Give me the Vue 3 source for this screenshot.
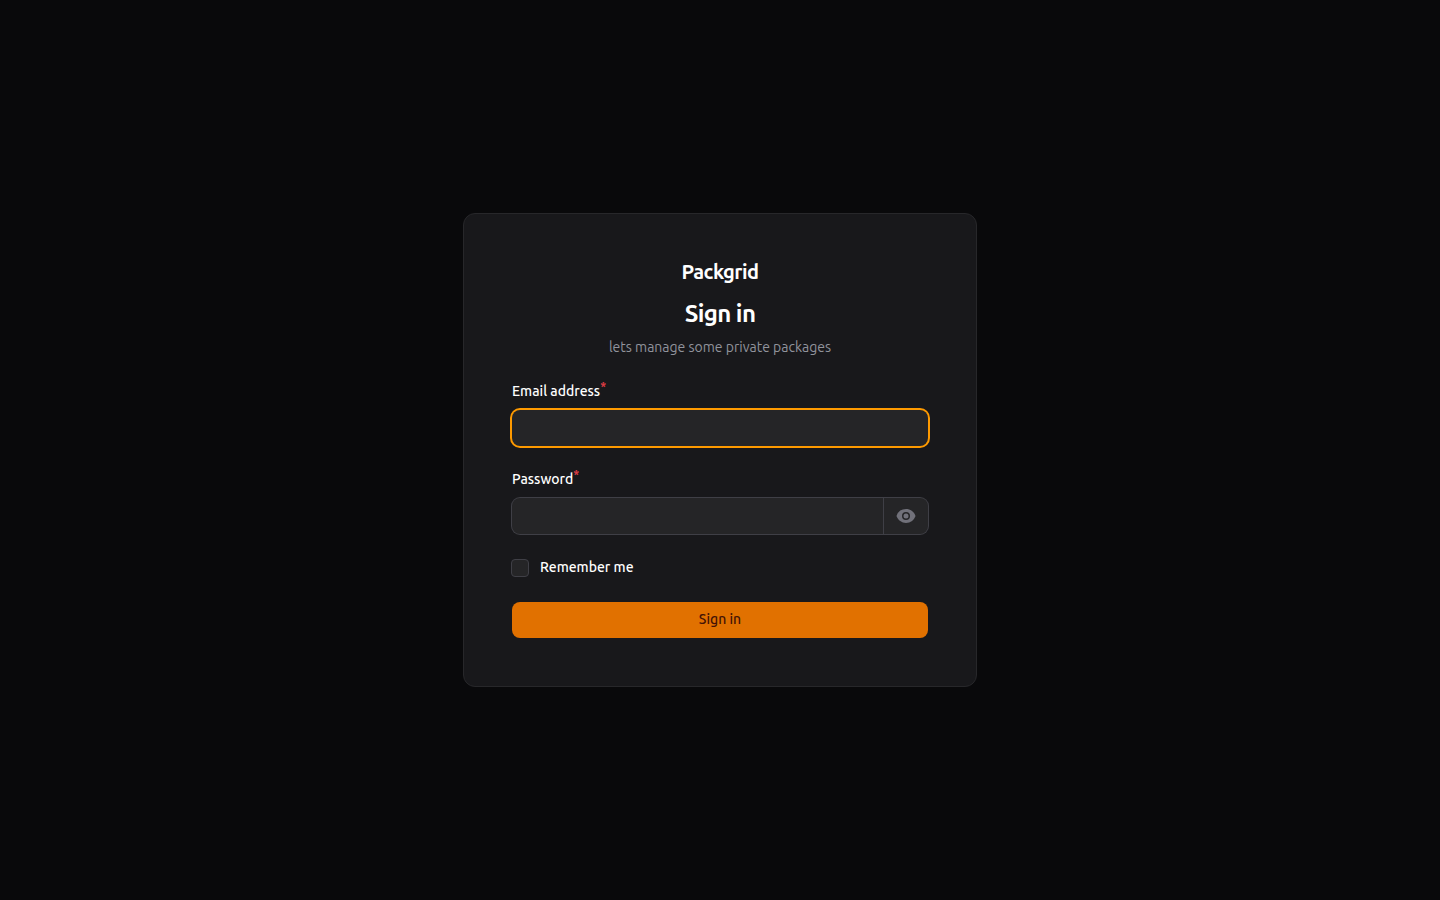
<template>
  <div class="page">
    <main class="card">
      <div class="brand">Packgrid</div>
      <h1 class="title">Sign in</h1>
      <p class="sub">lets manage some private packages</p>
      <form class="form" @submit.prevent>
        <div class="field">
          <label class="label" for="email">Email address<sup class="req">*</sup></label>
          <div class="box focused">
            <input id="email" class="input" type="email" />
          </div>
        </div>
        <div class="field">
          <label class="label" for="password">Password<sup class="req">*</sup></label>
          <div class="box">
            <input id="password" class="input" type="password" />
            <button class="eye" type="button" aria-label="Show password">
              <svg viewBox="0 0 20 20" fill="currentColor" width="20" height="20">
                <path d="M10 12.5a2.5 2.5 0 1 0 0-5 2.5 2.5 0 0 0 0 5Z" />
                <path fill-rule="evenodd" clip-rule="evenodd" d="M.664 10.59a1.651 1.651 0 0 1 0-1.186A10.004 10.004 0 0 1 10 3c4.257 0 7.893 2.66 9.336 6.41.147.381.146.804 0 1.186A10.004 10.004 0 0 1 10 17c-4.257 0-7.893-2.66-9.336-6.41ZM14 10a4 4 0 1 1-8 0 4 4 0 0 1 8 0Z" />
              </svg>
            </button>
          </div>
        </div>
        <label class="remember">
          <span class="check"></span>
          <span>Remember me</span>
        </label>
        <button class="submit" type="submit">Sign in</button>
      </form>
    </main>
  </div>
</template>

<script setup>
</script>

<style>
body {
  background: #09090b;
}
</style>

<style scoped>
.page {
  min-height: 900px;
  display: flex;
  align-items: center;
  justify-content: center;
  background: #09090b;
  font-family: "Ubuntu", "Noto Sans", sans-serif;
}

.card {
  width: 514px;
  box-sizing: border-box;
  padding: 48px;
  background: #18181b;
  border: 1px solid #27272a;
  border-radius: 12px;
  text-align: center;
}

.brand {
  font-size: 20px;
  line-height: 20px;
  font-weight: 700;
  letter-spacing: -0.025em;
  color: #fff;
}

.title {
  margin: 16px 0 0;
  font-size: 24px;
  line-height: 32px;
  font-weight: 700;
  letter-spacing: -0.025em;
  color: #fff;
}

.sub {
  margin: 7px 0 0;
  font-size: 14px;
  line-height: 20px;
  color: #91939c;
}

.form {
  margin-top: 25px;
  display: flex;
  flex-direction: column;
  gap: 24px;
  text-align: left;
}

.field {
  display: flex;
  flex-direction: column;
  gap: 8px;
}

.label {
  height: 18px;
  padding-bottom: 2px;
  font-size: 14px;
  line-height: 18px;
  font-weight: 500;
  color: #fff;
}

.req {
  position: relative;
  top: 1px;
  color: #dc3c44;
  font-size: 12px;
  font-weight: 700;
  line-height: 0;
}

.box {
  display: flex;
  height: 36px;
  background: #252527;
  border-radius: 8px;
  box-shadow: 0 0 0 1px #3f3f46;
  overflow: hidden;
}

.box.focused {
  box-shadow: 0 0 0 2px #fe9a00;
}

.input {
  flex: 1;
  min-width: 0;
  border: 0;
  outline: 0;
  background: transparent;
  color: #fff;
}

.eye {
  width: 45px;
  border: 0;
  border-left: 1px solid #3f3f46;
  background: transparent;
  color: #71717a;
  display: flex;
  align-items: center;
  justify-content: center;
  padding: 0;
}

.remember {
  display: flex;
  align-items: center;
  gap: 11px;
  margin: -1px 0 1px -1px;
  font-size: 14px;
  line-height: 20px;
  font-weight: 500;
  color: #fff;
}

.check {
  position: relative;
  top: 1px;
  width: 16px;
  height: 16px;
  background: #252527;
  border: 1px solid #3f3f46;
  border-radius: 4px;
}

.submit {
  height: 36px;
  border: 0;
  padding: 0 0 2px;
  border-radius: 8px;
  background: #e17100;
  color: #441306;
  font: inherit;
  font-size: 14px;
  font-weight: 500;
}
</style>
